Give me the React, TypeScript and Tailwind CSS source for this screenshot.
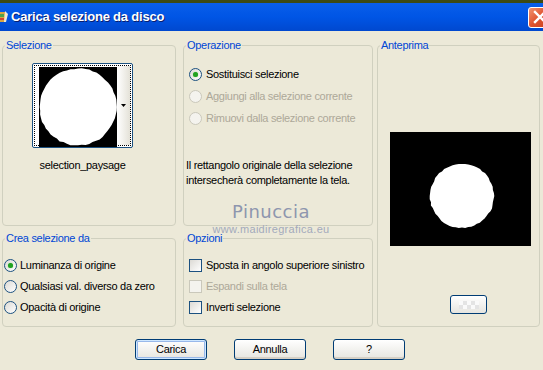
import React from 'react';

// jagged circle, like a selection loaded from disk
function blob(cx: number, cy: number, r: number, seed: number, n = 64) {
  const pts: string[] = [];
  for (let i = 0; i < n; i++) {
    const a = (i / n) * Math.PI * 2;
    const j = Math.sin(i * 12.9898 + seed) * 43758.5453;
    const noise = (j - Math.floor(j) - 0.5) * 1.1;
    const rr = r + noise;
    pts.push(`${(cx + Math.cos(a) * rr).toFixed(1)},${(cy + Math.sin(a) * rr).toFixed(1)}`);
  }
  return pts.join(' ');
}

const THUMB = blob(39, 40, 38.5, 1.3);
const PREVIEW = blob(72, 64, 32, 4.7);

function Radio({ checked, disabled }: { checked?: boolean; disabled?: boolean }) {
  return (
    <span
      className={`w-[13px] h-[13px] rounded-full border flex items-center justify-center shrink-0 ${
        disabled
          ? 'border-[#CAC8BB] bg-[#F4F3EE]'
          : 'border-[#1C5180] bg-gradient-to-br from-[#DCDAD5] to-[#FFFFFF]'
      }`}
    >
      {checked && <span className="w-[5px] h-[5px] rounded-full bg-[#21A121] shadow-[0_0_1px_#5DCF5D]" />}
    </span>
  );
}

function Check({ disabled }: { disabled?: boolean }) {
  return (
    <span
      className={`w-[13px] h-[13px] border shrink-0 ${
        disabled
          ? 'border-[#CAC8BB] bg-[#F4F3EE]'
          : 'border-[#1C5180] bg-gradient-to-br from-[#DCDAD5] to-[#FFFFFF]'
      }`}
    />
  );
}

function Group({ title, className, children }: { title: string; className: string; children?: React.ReactNode }) {
  return (
    <fieldset className={`border border-[#D0D0BF] rounded-[4px] ${className}`}>
      <legend className="ml-[2px] px-[1px] text-[11px] leading-[14px] text-[#0046D5]">{title}</legend>
      {children}
    </fieldset>
  );
}

function Button({ label, focused }: { label: string; focused?: boolean }) {
  return (
    <button
      className={`w-[72px] h-[21px] rounded-[3px] border border-[#003C74] bg-gradient-to-b from-[#FFFFFF] to-[#E6E5DF] text-[11px] text-black ${
        focused ? 'shadow-[inset_0_0_0_1px_#CEE7FF,inset_0_0_0_2px_#98B8EA]' : 'shadow-[inset_0_-2px_0_#D6D0C5]'
      }`}
    >
      {label}
    </button>
  );
}

export default function App() {
  return (
    <div className="w-[543px] h-[370px] bg-[#ECE9D8] overflow-hidden relative font-['Liberation_Sans',Arial,sans-serif] tracking-[-0.3px] text-black">
      {/* Strip of desktop behind */}
      <div className="h-[3px] bg-[#3D4A14]" />

      {/* Title bar */}
      <div className="h-[28px] bg-gradient-to-b from-[#0A5EEA] via-[#0055E5] to-[#0048CF] flex items-center relative">
        <svg className="w-[10px] h-[14px] ml-[-1px]" viewBox="0 0 10 14">
          <rect x="0" y="2" width="6" height="10" fill="#D9A441" />
          <rect x="1" y="4" width="4" height="3" fill="#4FA34A" />
          <rect x="1" y="8" width="4" height="2" fill="#D2452E" />
          <path d="M6 1 L9 4 L7 12 L5 12 Z" fill="#F2E9D2" />
        </svg>
        <span className="ml-[2px] text-[13px] font-bold text-white tracking-[-0.2px] whitespace-nowrap [text-shadow:1px_1px_0_#0A1E6E]">
          Carica selezione da disco
        </span>
        <div className="flex-1" />
        <div className="w-[22px] h-[21px] mr-[-7px] rounded-l-[3px] border border-white bg-gradient-to-br from-[#F0936F] via-[#E0532F] to-[#C8401E] flex items-center pl-[4px]">
          <svg className="w-[14px] h-[14px]" viewBox="0 0 14 14">
            <path d="M2 2 L12 12 M12 2 L2 12" stroke="white" strokeWidth="2.4" strokeLinecap="square" />
          </svg>
        </div>
      </div>

      {/* Client area */}
      <div className="pt-[7px] pl-[2px] flex">
        {/* Left column */}
        <div className="w-[174px] flex flex-col">
          <Group title="Selezione" className="h-[188px]">
            <div className="ml-[29px] mt-[11px] w-[101px] flex flex-col items-center">
              <div className="w-[101px] h-[85px] rounded-[2px] border border-[#1C5180] bg-white p-[1px]">
                <div className="w-full h-full border border-dotted border-black flex">
                  <svg className="ml-[4px] mt-[1px] w-[78px] h-[80px]" viewBox="0 0 78 80">
                    <rect width="78" height="80" fill="black" />
                    <polygon points={THUMB} fill="white" />
                  </svg>
                  <div className="flex-1 bg-gradient-to-r from-[#FFFFFF] to-[#E4E2D8] flex items-center justify-center">
                    <svg className="w-[5px] h-[3px]" viewBox="0 0 5 3">
                      <path d="M0 0 H5 L2.5 3 Z" fill="black" />
                    </svg>
                  </div>
                </div>
              </div>
              <span className="mt-[10px] text-[11px] leading-[14px]">selection_paysage</span>
            </div>
          </Group>

          <Group title="Crea selezione da" className="h-[96px] mt-[5px]">
            <div className="pl-[1px] mt-[13px] flex flex-col gap-[7px] text-[11px] leading-[14px]">
              <label className="flex items-center gap-[3px]">
                <Radio checked />
                Luminanza di origine
              </label>
              <label className="flex items-center gap-[3px]">
                <Radio />
                Qualsiasi val. diverso da zero
              </label>
              <label className="flex items-center gap-[3px]">
                <Radio />
                Opacità di origine
              </label>
            </div>
          </Group>
        </div>

        {/* Middle column */}
        <div className="w-[190px] ml-[7px] flex flex-col">
          <Group title="Operazione" className="h-[188px]">
            <div className="pl-[5px] mt-[15px] flex flex-col gap-[8px] text-[11px] leading-[14px]">
              <label className="flex items-center gap-[4px]">
                <Radio checked />
                Sostituisci selezione
              </label>
              <label className="flex items-center gap-[4px] text-[#ACA899]">
                <Radio disabled />
                Aggiungi alla selezione corrente
              </label>
              <label className="flex items-center gap-[4px] text-[#ACA899]">
                <Radio disabled />
                Rimuovi dalla selezione corrente
              </label>
            </div>
            <p className="ml-[2px] mt-[33px] text-[11px] leading-[15px]">
              Il rettangolo originale della selezione
              <br />
              intersecherà completamente la tela.
            </p>
          </Group>

          <Group title="Opzioni" className="h-[96px] mt-[5px]">
            <div className="pl-[5px] mt-[13px] flex flex-col gap-[7px] text-[11px] leading-[14px]">
              <label className="flex items-center gap-[4px]">
                <Check />
                Sposta in angolo superiore sinistro
              </label>
              <label className="flex items-center gap-[4px] text-[#ACA899]">
                <Check disabled />
                Espandi sulla tela
              </label>
              <label className="flex items-center gap-[4px]">
                <Check />
                Inverti selezione
              </label>
            </div>
          </Group>
        </div>

        {/* Right column */}
        <div className="w-[163px] ml-[4px]">
          <Group title="Anteprima" className="h-[289px]">
            <svg className="ml-[12px] mt-[80px] w-[141px] h-[114px]" viewBox="0 0 141 114">
              <rect width="141" height="114" fill="black" />
              <polygon points={PREVIEW} fill="white" />
            </svg>
            <div className="ml-[72px] mt-[49px] w-[37px] h-[19px] rounded-[3px] border border-[#003C74] bg-gradient-to-b from-[#FFFFFF] to-[#E6E5DF] flex items-center justify-center">
              <div className="w-[20px] h-[8px] bg-[repeating-conic-gradient(#E4E4E4_0%_25%,#FAFAFA_0%_50%)] bg-[length:8px_8px]" />
            </div>
          </Group>
        </div>
      </div>

      {/* Buttons */}
      <div className="mt-[12px] pl-[135px] flex gap-[27px]">
        <Button label="Carica" focused />
        <Button label="Annulla" />
        <Button label="?" />
      </div>

      {/* Watermark */}
      <div className="absolute left-[196px] top-[201px] w-[150px] flex flex-col items-center pointer-events-none">
        <span className="text-[18px] leading-[22px] text-[#8E96AE] tracking-[0.5px] font-['DejaVu_Sans',sans-serif]">
          Pinuccia
        </span>
        <span className="text-[11px] leading-[12px] text-[#A3A9BC] tracking-[0.3px]">www.maidiregrafica.eu</span>
      </div>
    </div>
  );
}
